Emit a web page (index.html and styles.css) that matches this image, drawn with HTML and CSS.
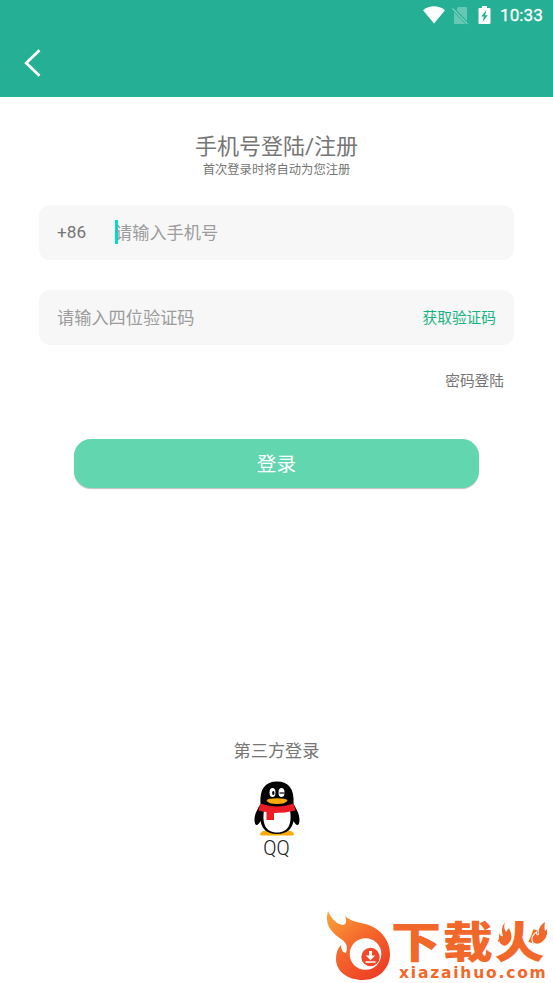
FILE: index.html
```html
<!DOCTYPE html>
<html lang="zh-CN">
<head>
    <meta charset="UTF-8">
    <meta name="viewport" content="width=device-width, initial-scale=1.0">
    <title>手机号登陆/注册</title>
    <link rel="stylesheet" href="styles.css">
</head>
<body>
    <header class="header">
        <div class="status-bar">
            <svg class="wifi" width="22" height="18" viewBox="0 0 22 18">
                <path fill="#fff" d="M0 4.2C6-1.1 16-1.1 22 4.2L11 17.6Z"/>
            </svg>
            <svg class="sim" width="17" height="19" viewBox="0 0 17 19">
                <path fill="#fff" opacity=".3" d="M6 1h8q1 0 1 1v13L4.5 4ZM2 6l11.5 12H3q-1 0-1-1Z"/>
                <path stroke="#fff" opacity=".4" stroke-width="1.3" d="M.5 2.5 15.5 18"/>
            </svg>
            <svg class="battery" width="13" height="18" viewBox="0 0 13 18">
                <path fill="#fff" d="M4 0h5v2h2.5q1 0 1 1v14q0 1-1 1h-10q-1 0-1-1V3q0-1 1-1H4Z"/>
                <path fill="#25af94" d="M8.5 4 3.2 10.5h2.7L4.5 16l5.3-6.7H7.1Z"/>
            </svg>
            <span class="time">10:33</span>
        </div>
        <button class="back" aria-label="返回">
            <svg width="18" height="28" viewBox="0 0 18 28">
                <path fill="none" stroke="#fff" stroke-width="2.8" d="M16.500 1.300 3.200 14l13.300 12.700"/>
            </svg>
        </button>
    </header>

    <main class="login">
        <h1>手机号登陆/注册</h1>
        <p class="subtitle">首次登录时将自动为您注册</p>

        <div class="field">
            <span class="prefix">+86</span>
            <span class="caret"></span>
            <span class="placeholder">请输入手机号</span>
        </div>
        <div class="field">
            <span class="placeholder">请输入四位验证码</span>
            <a class="get-code">获取验证码</a>
        </div>

        <a class="password-login">密码登陆</a>
        <button class="submit">登录</button>
    </main>

    <section class="third-party">
        <p class="third-title">第三方登录</p>
        <svg class="penguin" width="46" height="55" viewBox="0 0 46 55">
            <path fill="#faab07" d="M6 53q1-3.500 9-4h16q8 .5 9 4 0 1.500-3 1.500H9q-3 0-3-1.500Z"/>
            <path d="M6.500 23C5.500 8 11 .5 23 .5S40.500 8 39.500 23c3 5 6 10 6 16 0 3-1 5-2 5-1.500 0-3-2-4-4-1 7-6 13-16.500 13S7.500 47 6.500 40c-1 2-2.500 4-4 4-1 0-2-2-2-5 0-6 3-11 6-16Z"/>
            <path fill="#fff" d="M10 29h26c2 13-1 22.500-13 22.500S8 42 10 29Z"/>
            <ellipse cx="18.500" cy="11.500" rx="3" ry="4.500" fill="#fff"/>
            <ellipse cx="27.500" cy="11.500" rx="3" ry="4.500" fill="#fff"/>
            <ellipse cx="19.300" cy="12" rx="1.200" ry="2"/>
            <path stroke="#000" stroke-width="1.200" d="M25.500 12h5"/>
            <path fill="#faab07" d="M12.500 19.500q1-2.200 10.500-2.200t10.500 2.200q-2 3.500-10.500 3.500t-10.500-3.500Z"/>
            <path fill="#eb1c26" d="M6.500 22.500q16.500 6 33 0l2 7q-10 2.500-21.500 2.500v7h-7.500v-8q-5-.5-8-1.500Z"/>
        </svg>
        <span class="qq">QQ</span>
    </section>

    <div class="watermark">
        <svg class="flame" width="64" height="70" viewBox="0 0 64 70">
            <defs>
                <linearGradient id="fire" x1="0" y1="0" x2=".7" y2="1">
                    <stop offset="0" stop-color="#fba53a"/>
                    <stop offset=".5" stop-color="#f56a2c"/>
                    <stop offset="1" stop-color="#ee3f25"/>
                </linearGradient>
            </defs>
            <path fill="url(#fire)" d="M1 0C5 9 10 13 16 14Q21 13 18 5Q23 10 34 12C52 15 63 28 63 43C63 58 51 69 36 69C20 69 9 60 9 48Q9 39 14 34Q14 41 19 42C21 36 20 32 14 28C5 22-3 14 1 0Z"/>
            <circle cx="38.500" cy="43" r="15.800" fill="#fff"/>
            <circle cx="43.500" cy="46" r="9.200" fill="#f0492a"/>
            <path fill="#fff" d="M42 40h3v4.500h3.200l-4.700 4.700-4.700-4.700H42ZM38.500 50.200h10v1.600h-10Z"/>
        </svg>
        <div class="brand">
            <div class="brand-name">下载火</div>
            <div class="brand-url">xiazaihuo.com</div>
            <svg class="sparks" width="48" height="26" viewBox="0 0 48 26">
                <path d="M6 0q-2 6 1 10l3-4q5 10 0 15-4 5-8 1-4-5-1-11 0 4 3 3Q1 6 6 0ZM46 0q-1 6 0 9l2-2q1 8-4 12-5 5-10 1-2-5 3-9 0 3 3 2Q38 5 46 0Z"/>
            </svg>
        </div>
    </div>
</body>
</html>
```
FILE: styles.css
```css
:root {
    --primary-color: #25af94;
    --button-color: #61d6af;
    --text-color: #757575;
    --hint-color: #9c9c9c;
    --field-background: #f7f7f7;
    --brand-color: #f2682a;
}

* {
    box-sizing: border-box;
}

body {
    margin: 0;
    height: 983px;
    display: flex;
    flex-direction: column;
    background: #fff;
    color: var(--text-color);
    font-family: Roboto, "Noto Sans CJK SC", sans-serif;
    overflow: hidden;
}

h1, p {
    margin: 0;
    font-weight: normal;
}

button {
    border: none;
    padding: 0;
    font-family: inherit;
}

.header {
    height: 97px;
    flex: none;
    background: var(--primary-color);
}

.status-bar {
    height: 30px;
    display: flex;
    justify-content: flex-end;
    align-items: center;
    padding-right: 10px;
    color: #fff;
}

.sim {
    margin-left: 7px;
}

.battery {
    margin-left: 9px;
}

.time {
    width: 43px;
    margin-left: 9px;
    font-size: 17.2px;
    line-height: 30px;
    white-space: nowrap;
    -webkit-text-stroke: 0.3px #fff;
}

.back {
    display: block;
    margin: 19px 0 0 23px;
    height: 28px;
    background: none;
}

.login {
    display: flex;
    flex-direction: column;
    padding: 36px 39px 0;
}

h1 {
    font-size: 22px;
    line-height: 28px;
    text-align: center;
}

.subtitle {
    font-size: 12.3px;
    line-height: 18px;
    margin-bottom: 26px;
    text-align: center;
}

.field {
    height: 55px;
    display: flex;
    align-items: center;
    margin-bottom: 30px;
    padding: 0 18px 2px;
    border-radius: 11px;
    background: var(--field-background);
    font-size: 17.2px;
}

.prefix {
    width: 58px;
    padding-top: 1px;
}

.caret {
    width: 3px;
    height: 24px;
    margin-right: -3px;
    background: #00dfc8;
}

.placeholder {
    color: var(--hint-color);
}

.get-code {
    margin-left: auto;
    font-size: 14.7px;
    color: #17b280;
}

.password-login {
    align-self: flex-end;
    margin: -5px 10px 0 0;
    font-size: 14.7px;
    line-height: 22px;
}

.submit {
    height: 49px;
    margin: 47px 35px 0;
    padding-bottom: 2px;
    border-radius: 17px;
    background: var(--button-color);
    box-shadow: 0 1px 1px rgba(0, 0, 0, 0.25);
    color: #fff;
    font-size: 19.7px;
}

.third-party {
    display: flex;
    flex-direction: column;
    align-items: center;
    margin-top: 251px;
}

.third-title {
    font-size: 17.2px;
    line-height: 24px;
}

.penguin {
    margin-top: 18px;
}

.qq {
    margin-top: 1px;
    color: #111;
    font-size: 19.5px;
    font-weight: 300;
    line-height: 24px;
}

.watermark {
    display: flex;
    align-self: flex-end;
    margin: 50px 6px 0 0;
    color: var(--brand-color);
}

.brand {
    position: relative;
    width: 156px;
    padding-top: 8px;
}

.brand-name {
    width: 139px;
    font-family: "Noto Sans CJK SC", sans-serif;
    font-size: 43.5px;
    font-weight: 900;
    line-height: 42px;
    letter-spacing: 1.5px;
    white-space: nowrap;
    transform: scaleX(1.15);
    transform-origin: left;
}

.brand-url {
    margin: 3px 0 0 8px;
    font-family: "DejaVu Sans", sans-serif;
    font-size: 15.5px;
    font-weight: bold;
    line-height: 18px;
    letter-spacing: 1.8px;
    white-space: nowrap;
}

.sparks {
    position: absolute;
    top: 11px;
    right: 0;
    fill: var(--brand-color);
    stroke: #fff;
    stroke-width: 2px;
    paint-order: stroke;
}
```
